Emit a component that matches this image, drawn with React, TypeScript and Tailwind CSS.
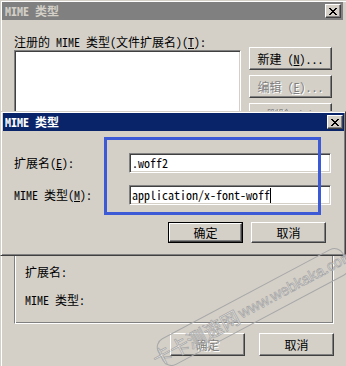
import React from 'react';

const raised =
  'bg-[#d4d0c8] border border-t-white border-l-white border-r-[#404040] border-b-[#404040] shadow-[inset_-1px_-1px_0_#808080]';
const sunken =
  'bg-white border border-t-[#808080] border-l-[#808080] border-r-white border-b-white shadow-[inset_1px_1px_0_#404040,inset_-1px_-1px_0_#d4d0c8]';
const disabledText = 'text-[#808080] [text-shadow:1px_1px_0_#ffffff]';

const CloseGlyph = () => (
  <svg width="8" height="7" viewBox="0 0 8 7" shapeRendering="crispEdges">
    {[0, 1, 2, 3, 4, 5, 6].map((r) => (
      <g key={r} fill="#000">
        <rect x={r} y={r} width="2" height="1" />
        <rect x={6 - r} y={r} width="2" height="1" />
      </g>
    ))}
  </svg>
);

const CloseButton = () => (
  <div className={`${raised} w-[16px] h-[14px] flex items-center justify-center`}>
    <CloseGlyph />
  </div>
);

const Button: React.FC<{
  children: React.ReactNode;
  width: string;
  height: string;
  disabled?: boolean;
  isDefault?: boolean;
}> = ({ children, width, height, disabled, isDefault }) => {
  const face = (
    <div
      className={`${raised} w-full h-full flex items-center justify-center ${disabled ? disabledText : 'text-black'}`}
    >
      {children}
    </div>
  );
  if (isDefault) {
    return <div className={`${width} ${height} border border-black`}>{face}</div>;
  }
  return <div className={`${width} ${height}`}>{face}</div>;
};

export default function App() {
  return (
    <div className="relative w-[346px] h-[366px] overflow-hidden bg-[#d4d0c8] font-['Noto_Sans_Mono_CJK_SC','Noto_Sans_CJK_SC',monospace] text-[12px] leading-[12px] text-black pl-[2px] pr-[3px] pt-[2px] shadow-[inset_1px_1px_0_#d4d0c8,inset_2px_2px_0_#ffffff]">
      {/* Background window: MIME types list */}
      <div className="h-[18px] bg-[#808080] flex items-center justify-between pl-[3px] pr-[2px]">
        <span className="font-bold text-[#d4d0c8]">MIME 类型</span>
        <CloseButton />
      </div>

      <div className="pl-[12px]">
        <div className="flex gap-[8px]">
          <div className="w-[227px]">
            <div className="mt-[16px] h-[12px] whitespace-nowrap">
              注册的 MIME 类型(文件扩展名)(<u>T</u>):
            </div>
            <div className={`${sunken} mt-[2px] h-[140px]`} />
          </div>
          <div className="pt-[27px] flex flex-col gap-[5px]">
            <Button width="w-[83px]" height="h-[23px]">
              新建 (<u>N</u>)...
            </Button>
            <Button width="w-[83px]" height="h-[23px]" disabled>
              编辑 (<u>E</u>)...
            </Button>
            <Button width="w-[83px]" height="h-[23px]" disabled>
              删除 (<u>D</u>)
            </Button>
          </div>
        </div>

        <div className="w-[320px]">
          <div className="mt-[10px] h-[124px] border border-t-[#808080] border-l-[#808080] border-r-white border-b-white shadow-[inset_1px_1px_0_#ffffff,inset_-1px_-1px_0_#808080] flex flex-col justify-end gap-[16px] pl-[10px] pb-[17px]">
            <div className="h-[12px]">扩展名:</div>
            <div className="h-[12px]">MIME 类型:</div>
          </div>
          <div className="mt-[9px] flex justify-end gap-[14px]">
            <Button width="w-[75px]" height="h-[23px]" disabled>
              确定
            </Button>
            <Button width="w-[75px]" height="h-[23px]">
              取消
            </Button>
          </div>
        </div>
      </div>

      {/* Foreground window: edit MIME type */}
      <div className="absolute left-0 top-[111px] w-[346px] h-[145px] bg-[#d4d0c8] border border-t-[#d4d0c8] border-l-[#d4d0c8] border-r-[#404040] border-b-[#404040] shadow-[inset_1px_1px_0_#ffffff,inset_-1px_-1px_0_#808080] pt-[1px] pl-[2px] pr-[1px]">
        <div className="h-[18px] bg-[#0a246a] flex items-center justify-between pl-[2px] pr-[1px]">
          <span className="font-bold text-white">MIME 类型</span>
          <CloseButton />
        </div>

        <div className="pl-[11px] pt-[22px]">
          <div className="flex items-center">
            <div className="w-[115px]">
              扩展名(<u>E</u>):
            </div>
            <div className={`${sunken} w-[202px] h-[20px] flex items-center pl-[2px]`}>.woff2</div>
          </div>
          <div className="flex items-center mt-[12px]">
            <div className="w-[115px]">
              MIME 类型(<u>M</u>):
            </div>
            <div className={`${sunken} w-[202px] h-[20px] flex items-center pl-[2px]`}>
              <span>application/x-font-woff</span>
              <span className="w-[1px] h-[15px] bg-black" />
            </div>
          </div>
          <div className="flex gap-[8px] ml-[154px] mt-[17px]">
            <Button width="w-[75px]" height="h-[21px]" isDefault>
              确定
            </Button>
            <Button width="w-[75px]" height="h-[21px]">
              取消
            </Button>
          </div>
        </div>

        {/* annotation box */}
        <div className="absolute left-[103px] top-[25px] w-[217px] h-[78px] border-[3px] border-[#3c5ad6]" />
      </div>

      {/* watermark */}
      <div className="absolute left-[148px] top-[292px] w-[210px] h-[30px] rotate-[-28deg] rounded-[10px] border border-[#a8a8a8] flex items-center justify-center gap-[2px] whitespace-nowrap text-white/60 [-webkit-text-stroke:0.7px_#a4a4a4] font-['Noto_Sans_CJK_SC',sans-serif]">
        <span className="text-[19px] leading-[20px]">卡卡测速网</span>
        <span className="text-[15px] leading-[16px] font-['Liberation_Sans',sans-serif]">www.webkaka.com</span>
      </div>
    </div>
  );
}
